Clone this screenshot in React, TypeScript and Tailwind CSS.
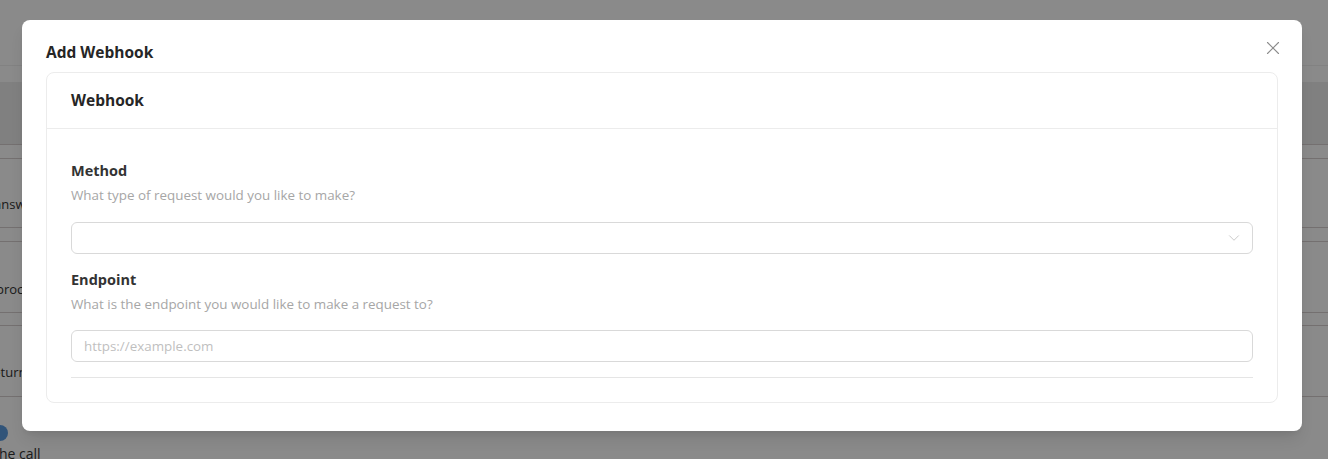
import { X, ChevronDown } from "lucide-react";

const font = { fontFamily: '"Open Sans", "Noto Sans", sans-serif' };

function BackgroundPage() {
  // the page behind the dialog, mostly hidden by it
  return (
    <div className="w-[1328px] h-[459px] bg-white overflow-hidden text-[13px] text-[#333]">
      <div className="h-[66px] border-b border-[#f0f0f0]" />
      <div className="h-[16px]" />
      <div className="h-[63px] bg-[#ececec] border-b border-[#d6d0d0]" />
      <div className="h-[13px]" />
      <div className="h-[70px] border-y border-[#d6d0d0] flex items-center pt-[24px]">
        <span className="-ml-[6px]">answer</span>
      </div>
      <div className="h-[13px]" />
      <div className="h-[72px] border-y border-[#d6d0d0] flex items-center pt-[26px]">
        <span className="-ml-[4px]">process</span>
      </div>
      <div className="h-[12px]" />
      <div className="h-[72px] border-y border-[#d6d0d0] flex items-center pt-[24px]">
        <span className="-ml-[12px]">return for</span>
      </div>
      <div className="flex items-center h-[48px] pt-[24px]">
        <span className="-ml-[8px] w-[16px] h-[16px] rounded-full bg-[#5b9be0] inline-block" />
      </div>
      <div className="-mt-[2px] text-[14px] -ml-[6px]">the call</div>
    </div>
  );
}

export default function App() {
  return (
    <div className="relative w-[1328px] h-[459px] overflow-hidden" style={font}>
      <BackgroundPage />
      <div className="absolute inset-0 bg-black/[0.46]" />

      <div className="absolute left-[22px] top-[20px] w-[1280px] h-[411px] bg-white rounded-lg shadow-lg px-6 pt-[22px]">
        <button className="absolute left-[1240px] top-[17px] w-[22px] h-[22px] flex items-center justify-center text-[#8c8c8c]">
          <X className="w-[22px] h-[22px]" strokeWidth={1.2} />
        </button>

        <h2 className="h-[20px] leading-[20px] text-[15.5px] font-bold text-[#262626] mb-[10px]">
          Add Webhook
        </h2>

        <div className="border border-[#ececec] rounded-lg">
          <div className="h-[56px] px-6 flex items-center border-b border-[#ececec]">
            <span className="text-[15.5px] font-bold text-[#262626]">Webhook</span>
          </div>

          <div className="px-6 pt-8 pb-6">
            <div className="text-[14.5px] leading-[20px] font-bold text-[#333]">Method</div>
            <div className="mt-1 text-[13.4px] leading-[20px] text-[#a6a6a6]">
              What type of request would you like to make?
            </div>
            <div className="mt-[17px] h-[32px] border border-[#d9d9d9] rounded-md flex items-center justify-end pr-[9px]">
              <ChevronDown className="w-[18px] h-[18px] text-[#bfbfbf]" strokeWidth={1.1} />
            </div>

            <div className="mt-4 text-[14.5px] leading-[20px] font-bold text-[#333]">Endpoint</div>
            <div className="mt-1 text-[13.4px] leading-[20px] text-[#a6a6a6]">
              What is the endpoint you would like to make a request to?
            </div>
            <input
              className="mt-4 w-full h-[32px] border border-[#d9d9d9] rounded-md px-3 text-[13.4px] outline-none placeholder:text-[#bfbfbf]"
              placeholder="https://example.com"
            />
            <div className="mt-[15px] border-t border-[#e5e5e5]" />
          </div>
        </div>
      </div>
    </div>
  );
}
